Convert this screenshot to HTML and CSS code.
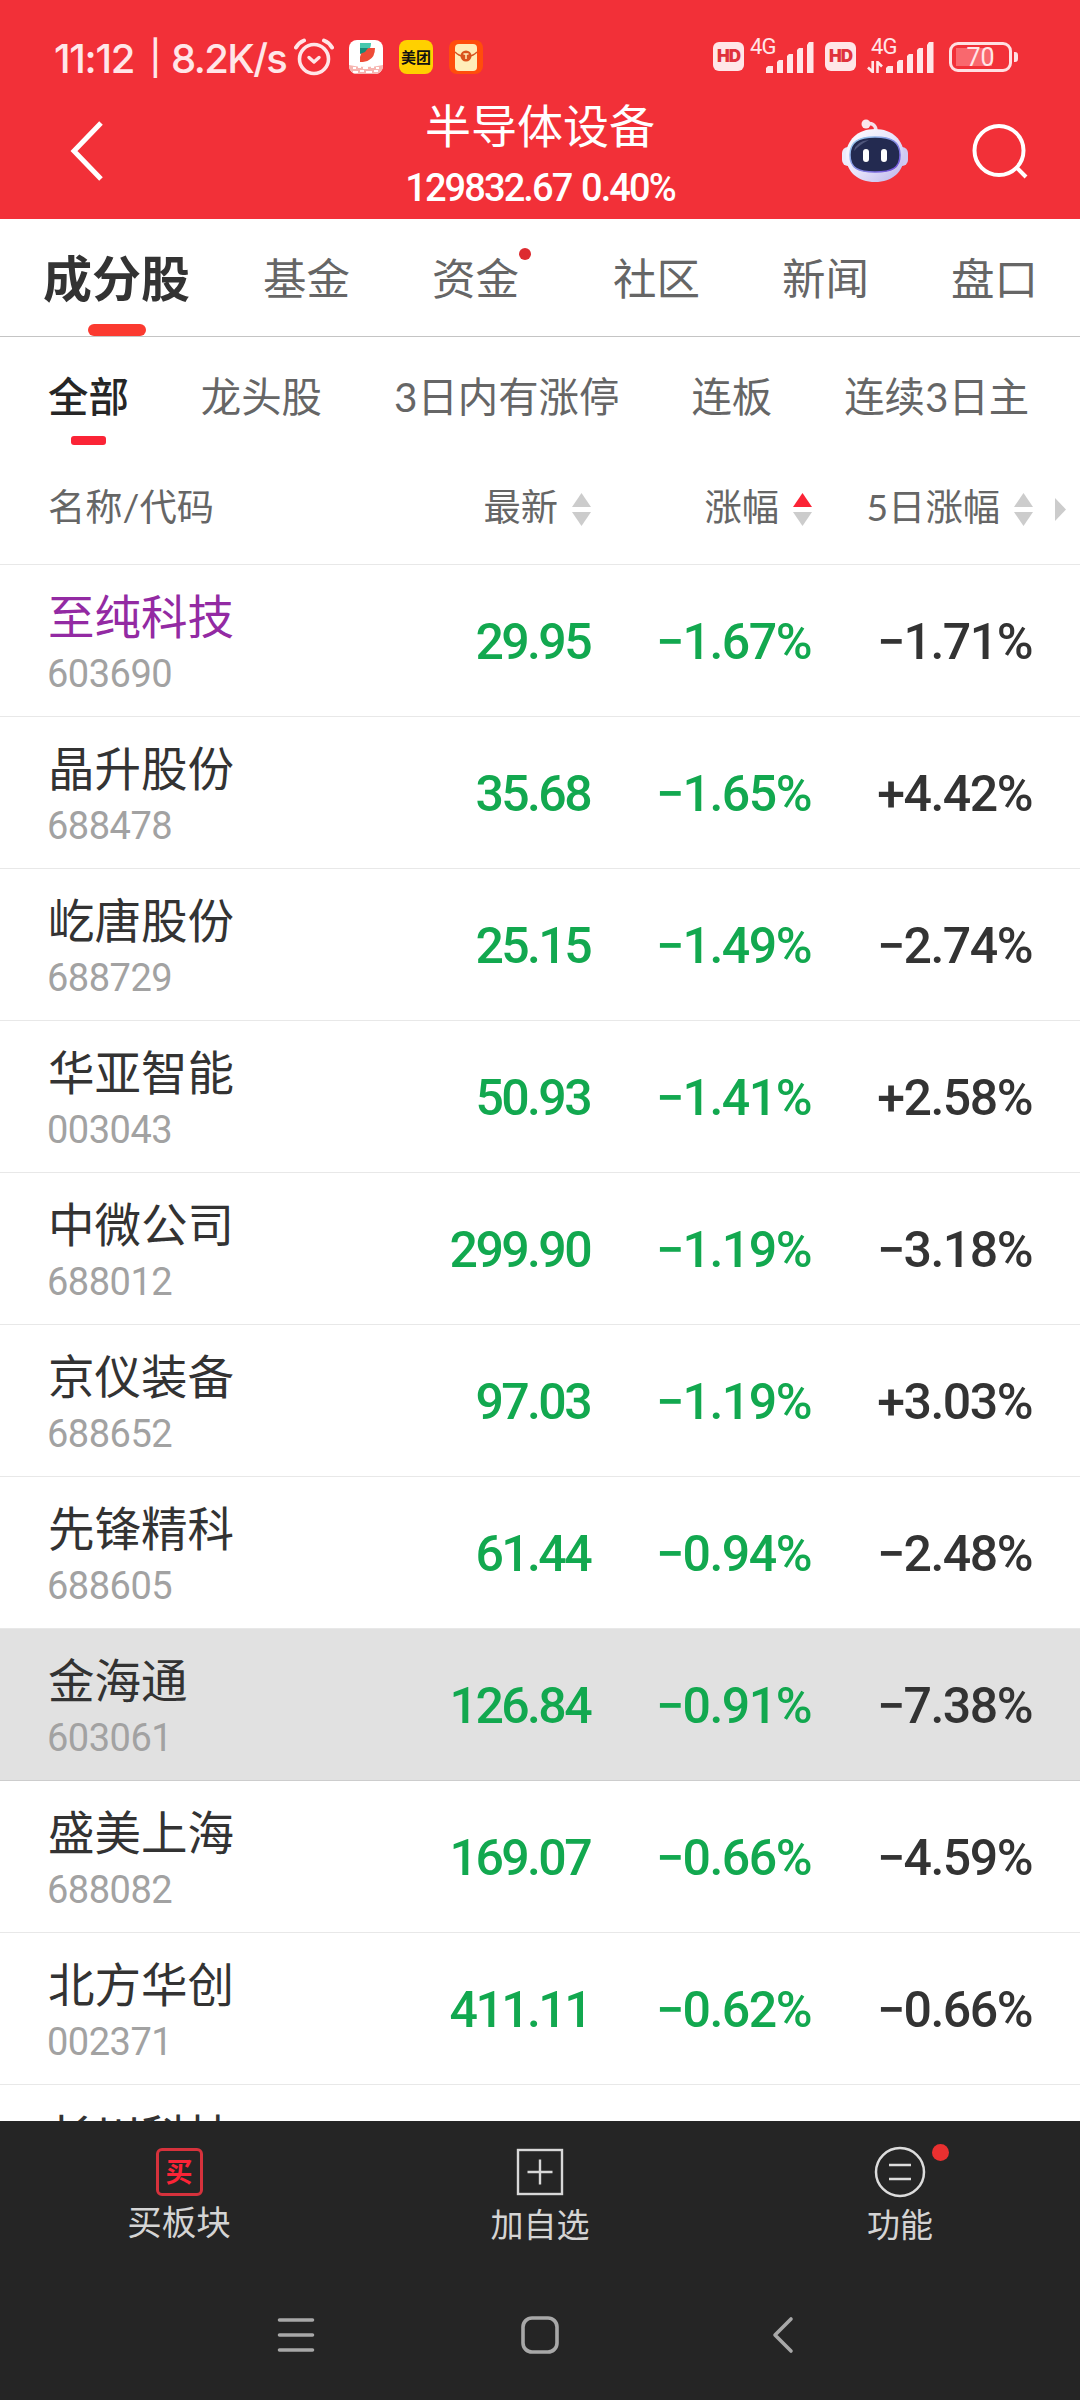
FILE: index.html
```html
<!DOCTYPE html>
<html lang="zh-CN">
<head>
    <meta charset="UTF-8">
    <meta name="viewport" content="width=device-width, initial-scale=1.0">
    <title>半导体设备</title>
    <link rel="stylesheet" href="styles.css">
</head>
<body>
    <div class="screen">
        <header class="top">
            <!-- Status Bar -->
            <div class="status">
                <div class="clock">
                    <span class="time">11:12</span>
                    <span class="bar">|</span>
                    <span>8.2K/s</span>
                </div>
                <svg class="alarm" width="40" height="38" viewBox="0 0 40 38" fill="none" stroke="#ffe6e8" stroke-linecap="round">
                    <circle cx="20" cy="21" r="14.5" stroke-width="3.6"/>
                    <path d="M15 19.500l5 4.500 5-4.500" stroke-width="3.400" stroke-linejoin="round"/>
                    <path d="M2 9.500Q5 4.500 10 2.500M38 9.500Q35 4.500 30 2.500" stroke-width="4"/>
                </svg>
                <svg class="app" width="34" height="34" viewBox="0 0 34 34">
                    <rect width="34" height="34" rx="8" fill="#fff"/>
                    <path d="M11 3h11q0 6-4 8l-7 2z" fill="#45c8ae"/>
                    <path d="M11 22V17q1-8 9-9h6q0 9-6 12-3 2-9 2z" fill="#ee4b37"/>
                    <path d="M11 8h8l-3 4-5 2z" fill="#168a78"/>
                    <path d="M0 25q17 4 34 0v1a8 8 0 0 1-8 8H8a8 8 0 0 1-8-8z" fill="#f6b5b0"/>
                    <path d="M4 28h3M9 27h3M14 28h5M22 27h3M27 28h3M4 32h5M11 31h4M17 32h6M25 31h4" stroke="#fff" stroke-width="2"/>
                </svg>
                <span class="app meituan">美团</span>
                <svg class="app" width="34" height="34" viewBox="0 0 34 34">
                    <rect width="34" height="34" rx="8" fill="#ff4d0c"/>
                    <rect x="6" y="4" width="22" height="27" rx="4" fill="#ffedb9"/>
                    <path d="M6 12q4 4 8 4h6q4 0 8-4" fill="none" stroke="#d65522" stroke-width="1.500"/>
                    <circle cx="17" cy="16" r="5.500" fill="#d9541d"/>
                    <path d="M14.500 14h5M17 14v5" stroke="#ffedb9" stroke-width="1.500"/>
                </svg>
                <div class="signals">
                    <span class="hd">HD</span>
                    <span class="net">
                        <b>4G</b>
                        <svg width="48" height="31" viewBox="0 0 48 31" fill="#ffe6e8">
                            <path d="M0 31v-5l2-2h5v7zM11 31V20l2-2h4v13zM21 31V14l2-2h4v19zM31 31V8l2-2h4v25zM41 31V3l2-3h4.500v31z"/>
                        </svg>
                    </span>
                    <span class="hd hd2">HD</span>
                    <span class="net net2">
                        <b>4G</b>
                        <svg class="updown" width="16" height="12" viewBox="0 0 16 12" fill="none" stroke="#ffe6e8" stroke-width="2.600">
                            <path d="M5.700 0v11L1 6.500M10.500 12V1l4.500 4.500"/>
                        </svg>
                        <svg width="48" height="31" viewBox="0 0 48 31" fill="#ffe6e8">
                            <path d="M0 31v-5l2-2h5v7zM11 31V20l2-2h4v13zM21 31V14l2-2h4v19zM31 31V8l2-2h4v25zM41 31V3l2-3h4.500v31z"/>
                        </svg>
                    </span>
                    <span class="battery">70</span>
                </div>
            </div>

            <!-- Title Bar -->
            <div class="titlebar">
                <svg class="back" width="36" height="64" viewBox="0 0 36 64" fill="none" stroke="#fff" stroke-width="5">
                    <path d="M33 4L6 32l27 28"/>
                </svg>
                <div class="title">
                    <h1>半导体设备</h1>
                    <p>129832.67 0.40%</p>
                </div>
                <svg class="robot" width="68" height="64" viewBox="0 0 68 64">
                    <defs>
                        <linearGradient id="shell" x1="0" y1="0" x2="1" y2="1">
                            <stop offset="0" stop-color="#fff"/>
                            <stop offset=".5" stop-color="#e8e4fb"/>
                            <stop offset="1" stop-color="#b9b3ea"/>
                        </linearGradient>
                        <linearGradient id="rim" x1="0" y1="0" x2="1" y2="1">
                            <stop offset="0" stop-color="#9fd8f0"/>
                            <stop offset="1" stop-color="#6c45d8"/>
                        </linearGradient>
                    </defs>
                    <path d="M25 5q9-2 10 6" fill="none" stroke="#f6dfe9" stroke-width="3.500"/>
                    <circle cx="25" cy="5" r="4.500" fill="#fbe6ed"/>
                    <rect x="1" y="28" width="14" height="19" rx="6" fill="#eceafa"/>
                    <rect x="53" y="28" width="14" height="19" rx="6" fill="#cfcaf2"/>
                    <path d="M34 10C51 10 63 21 63 37S51 63 34 63 5 53 5 37 17 10 34 10z" fill="url(#shell)"/>
                    <path d="M34 18C51 18 59 23 59 36S51 53 34 53 9 49 9 36 17 18 34 18z" fill="#232a50" stroke="url(#rim)" stroke-width="1.500"/>
                    <path d="M13 32q2-10 15-11-10 5-15 11z" fill="#50577c"/>
                    <rect x="22" y="30" width="6" height="13" rx="3" fill="#fff"/>
                    <rect x="40" y="30" width="6" height="13" rx="3" fill="#fff"/>
                </svg>
                <svg class="search" width="60" height="58" viewBox="0 0 60 58" fill="none" stroke="#fff" stroke-width="4">
                    <circle cx="30" cy="27.500" r="24.500"/>
                    <path d="M47 44l10 10"/>
                </svg>
            </div>
        </header>

        <!-- Main Tabs -->
        <nav class="tabs">
            <span class="tab active">成分股</span>
            <span class="tab">基金</span>
            <span class="tab dot">资金</span>
            <span class="tab">社区</span>
            <span class="tab">新闻</span>
            <span class="tab">盘口</span>
        </nav>

        <!-- Filters -->
        <nav class="filters">
            <span class="filter active">全部</span>
            <span class="filter">龙头股</span>
            <span class="filter">3日内有涨停</span>
            <span class="filter">连板</span>
            <span class="filter">连续3日主</span>
        </nav>

        <!-- Stock List -->
        <main class="list">
            <div class="row head">
                <span>名称/代码</span>
                <span class="col">最新<i class="sort"></i></span>
                <span class="col">涨幅<i class="sort up"></i></span>
                <span class="col">5日涨幅<i class="sort"></i></span>
                <i class="more"></i>
            </div>
            <div class="row">
                <div><p class="name visited">至纯科技</p><p class="code">603690</p></div>
                <span class="num price">29.95</span><span class="num green">−1.67%</span><span class="num">−1.71%</span>
            </div>
            <div class="row">
                <div><p class="name">晶升股份</p><p class="code">688478</p></div>
                <span class="num price">35.68</span><span class="num green">−1.65%</span><span class="num">+4.42%</span>
            </div>
            <div class="row">
                <div><p class="name">屹唐股份</p><p class="code">688729</p></div>
                <span class="num price">25.15</span><span class="num green">−1.49%</span><span class="num">−2.74%</span>
            </div>
            <div class="row">
                <div><p class="name">华亚智能</p><p class="code">003043</p></div>
                <span class="num price">50.93</span><span class="num green">−1.41%</span><span class="num">+2.58%</span>
            </div>
            <div class="row">
                <div><p class="name">中微公司</p><p class="code">688012</p></div>
                <span class="num price">299.90</span><span class="num green">−1.19%</span><span class="num">−3.18%</span>
            </div>
            <div class="row">
                <div><p class="name">京仪装备</p><p class="code">688652</p></div>
                <span class="num price">97.03</span><span class="num green">−1.19%</span><span class="num">+3.03%</span>
            </div>
            <div class="row">
                <div><p class="name">先锋精科</p><p class="code">688605</p></div>
                <span class="num price">61.44</span><span class="num green">−0.94%</span><span class="num">−2.48%</span>
            </div>
            <div class="row pressed">
                <div><p class="name">金海通</p><p class="code">603061</p></div>
                <span class="num price">126.84</span><span class="num green">−0.91%</span><span class="num">−7.38%</span>
            </div>
            <div class="row">
                <div><p class="name">盛美上海</p><p class="code">688082</p></div>
                <span class="num price">169.07</span><span class="num green">−0.66%</span><span class="num">−4.59%</span>
            </div>
            <div class="row">
                <div><p class="name">北方华创</p><p class="code">002371</p></div>
                <span class="num price">411.11</span><span class="num green">−0.62%</span><span class="num">−0.66%</span>
            </div>
            <div class="row">
                <div><p class="name">长川科技</p></div>
            </div>
        </main>

        <footer class="bottom">
            <!-- Actions -->
            <div class="actions">
                <div class="action buy">
                    <span class="buy-icon">买</span>
                    <span>买板块</span>
                </div>
                <div class="action">
                    <svg width="52" height="52" viewBox="0 0 52 52" fill="none" stroke="#d8d8d8" stroke-width="2.400">
                        <rect x="4" y="4" width="44" height="44"/>
                        <path d="M13.500 26h25M26 13.500v25"/>
                    </svg>
                    <span>加自选</span>
                </div>
                <div class="action">
                    <svg width="52" height="52" viewBox="0 0 52 52" fill="none" stroke="#dcdcdc" stroke-width="2.500">
                        <circle cx="26" cy="26" r="24"/>
                        <path d="M15 19h22M15 33h22"/>
                    </svg>
                    <i class="badge"></i>
                    <span>功能</span>
                </div>
            </div>
            <!-- System Navigation -->
            <div class="sysnav">
                <svg width="40" height="40" viewBox="0 0 40 40" fill="none" stroke="#a8a8a8" stroke-width="3.600" stroke-linecap="round">
                    <path d="M3.500 5h33M3.500 20h33M3.500 35h33"/>
                </svg>
                <svg width="40" height="40" viewBox="0 0 40 40" fill="none" stroke="#a8a8a8" stroke-width="3.600">
                    <rect x="3" y="3" width="34" height="34" rx="9"/>
                </svg>
                <svg width="40" height="40" viewBox="0 0 40 40" fill="none" stroke="#a8a8a8" stroke-width="3.600" stroke-linecap="round" stroke-linejoin="round">
                    <path d="M27 4L11 20l16 16"/>
                </svg>
            </div>
        </footer>
    </div>
</body>
</html>
```
FILE: styles.css
```css
* {
    box-sizing: border-box;
    margin: 0;
    padding: 0;
}
body {
    font-family: Lato, "Noto Sans CJK SC", sans-serif;
    color: #333;
    background-color: #fff;
}
i, b {
    font-style: normal;
    font-weight: normal;
}
svg {
    display: block;
    flex: none;
}
.screen {
    width: 1080px;
    height: 2400px;
    display: flex;
    flex-direction: column;
    overflow: hidden;
}

/* header */
.top {
    height: 219px;
    flex: none;
    background-color: #f23038;
    color: #fff;
}
.status {
    height: 96px;
    padding: 36px 62px 0 54px;
    display: flex;
    align-items: flex-start;
    color: #ffe6e8;
}
.clock {
    width: 240px;
    display: flex;
    font-family: Inter, sans-serif;
    font-size: 40px;
    line-height: 46px;
    font-weight: 500;
    letter-spacing: -1.6px;
    white-space: nowrap;
}
.time {
    width: 84px;
    letter-spacing: -1.300px;
}
.bar {
    width: 33px;
    text-align: center;
    font-size: 34px;
    line-height: 44px;
}
.alarm {
    margin: 2px 15px 0 0;
}
.app {
    margin: 4px 16px 0 0;
}
.meituan {
    width: 34px;
    height: 34px;
    border-radius: 8px;
    background-color: #ffd000;
    color: #111;
    font-size: 15px;
    font-weight: 700;
    line-height: 34px;
    text-align: center;
    white-space: nowrap;
}
.signals {
    margin-left: auto;
    display: flex;
}
.hd {
    width: 31px;
    height: 29px;
    margin-top: 6px;
    border-radius: 6px;
    background-color: #ffe6e8;
    color: #e0323c;
    font-family: Inter, sans-serif;
    font-size: 17px;
    font-weight: 900;
    line-height: 29px;
    text-align: center;
    letter-spacing: -1px;
}
.net {
    position: relative;
    width: 64px;
    margin: 6px 11px 0 6px;
    display: flex;
    justify-content: flex-end;
}
.net b {
    position: absolute;
    left: 0;
    top: -7px;
    font-family: Roboto, sans-serif;
    font-size: 22px;
    line-height: 24px;
    letter-spacing: -0.8px;
}
.net2 {
    width: 66px;
    margin: 6px 15px 0 12px;
}
.net2 b {
    left: 3px;
}
.net2 .updown {
    margin: 19px 3px 0 0;
}
.battery {
    position: relative;
    width: 63px;
    height: 30px;
    margin: 6px 6px 0 0;
    border: 3px solid #ffe0e2;
    border-radius: 9px;
    background: linear-gradient(#f9686e, #f9686e) 4px 3px / 36px 18px no-repeat;
    font-family: Roboto, sans-serif;
    font-size: 25px;
    line-height: 26px;
    text-align: center;
}
.battery::after {
    content: "";
    position: absolute;
    right: -9px;
    top: 7px;
    width: 4px;
    height: 10px;
    border-radius: 0 3px 3px 0;
    background-color: #ffe0e2;
}
.titlebar {
    height: 123px;
    padding: 0 50px 0 68px;
    display: flex;
    align-items: flex-start;
}
.back {
    margin: 23px 0 0;
}
.title {
    width: 500px;
    margin: 0 51px 0 186px;
    text-align: center;
}
.title h1 {
    font-size: 46px;
    font-weight: 400;
    line-height: 60px;
}
.title p {
    font-family: Roboto, sans-serif;
    font-size: 38px;
    font-weight: 500;
    line-height: 36px;
    margin-top: 14px;
    letter-spacing: -1.9px;
    word-spacing: 2px;
}
.robot {
    margin: 23px 60px 0 0;
}
.search {
    margin-top: 27px;
}

/* tabs */
.tabs {
    height: 118px;
    flex: none;
    padding: 29px 0 0 43px;
    display: flex;
    border-bottom: 1px solid #c4c4c4;
    color: #666;
    white-space: nowrap;
}
.tab {
    position: relative;
    flex: none;
    width: 88px;
    margin-right: 81px;
    font-size: 43.500px;
    line-height: 60px;
}
.tab.active {
    width: 148px;
    margin-right: 72px;
    color: #333;
    font-size: 49px;
    font-weight: 600;
}
.tab.active::after {
    content: "";
    position: absolute;
    left: 45px;
    bottom: 0;
    width: 58px;
    height: 12px;
    border-radius: 6px;
    background-color: #fb3a30;
}
.tab.dot {
    margin-right: 93px;
}
.tab.dot::after {
    content: "";
    position: absolute;
    left: 87px;
    top: 0;
    width: 12px;
    height: 12px;
    border-radius: 50%;
    background-color: #dd2b30;
}
.filters {
    height: 120px;
    flex: none;
    padding: 35px 0 0 48px;
    display: flex;
    gap: 72px;
    color: #666;
    font-size: 40.400px;
    line-height: 50px;
    white-space: nowrap;
}
.filter {
    position: relative;
}
.filter.active {
    color: #262626;
    font-weight: 500;
}
.filter.active::after {
    content: "";
    position: absolute;
    left: 23px;
    top: 64px;
    width: 35px;
    height: 9px;
    border-radius: 3px;
    background-color: #fb2436;
}

/* list */
.list {
    flex: 1;
    min-height: 0;
    overflow: hidden;
}
.row {
    position: relative;
    height: 152px;
    padding: 0 47px 0 48px;
    display: grid;
    grid-template-columns: 322px 221px 221px 221px;
    border-bottom: 1px solid #e8e8e8;
}
.row.head {
    height: 108px;
    padding-top: 27px;
    color: #666;
    font-size: 37.300px;
    line-height: 46px;
}
.col {
    display: flex;
    justify-content: flex-end;
}
.sort {
    width: 19px;
    height: 33px;
    margin: 9px 0 0 14px;
    display: flex;
    flex-direction: column;
    justify-content: space-between;
}
.sort::before,
.sort::after {
    content: "";
    height: 14px;
    background-color: #ccc;
    clip-path: polygon(50% 0, 100% 100%, 0 100%);
}
.sort::after {
    clip-path: polygon(0 0, 100% 0, 50% 100%);
}
.sort.up::before {
    background-color: #fb2436;
}
.more {
    position: absolute;
    left: 1055px;
    top: 41px;
    width: 11px;
    height: 23px;
    background-color: #ccc;
    clip-path: polygon(0 0, 100% 50%, 0 100%);
}
.name {
    margin-top: 21px;
    font-size: 46.500px;
    line-height: 60px;
    white-space: nowrap;
}
.name.visited {
    color: #932aa3;
}
.code {
    color: #a2a2a2;
    font-family: Roboto, sans-serif;
    font-size: 38px;
    line-height: 42px;
    margin-top: 7px;
    margin-left: -1px;
    letter-spacing: -0.5px;
}
.num {
    font-family: Roboto, sans-serif;
    font-size: 50px;
    font-weight: 500;
    line-height: 60px;
    margin-top: 47px;
    padding-right: 1px;
    text-align: right;
    letter-spacing: -1.500px;
    white-space: nowrap;
}
.green, .price {
    color: #12a84f;
}
.price {
    letter-spacing: -2.600px;
}
.pressed {
    background-color: #e1e1e1;
    border-bottom-color: #cdcdcd;
}

/* bottom */
.bottom {
    height: 279px;
    flex: none;
    background-color: #252525;
    color: #d4d4d4;
}
.actions {
    height: 164px;
    display: grid;
    grid-template-columns: repeat(3, 1fr);
}
.action {
    position: relative;
    padding-top: 25px;
    display: flex;
    flex-direction: column;
    align-items: center;
    gap: 6px;
    font-size: 33px;
    line-height: 40px;
}
.buy {
    padding-top: 27px;
    padding-right: 2px;
    font-size: 34.500px;
}
.buy-icon {
    width: 47px;
    height: 48px;
    border: 3px solid #d6323c;
    border-radius: 6px;
    color: #fb2436;
    font-size: 27px;
    font-weight: 700;
    line-height: 41px;
    text-align: center;
}
.badge {
    position: absolute;
    left: 212px;
    top: 23px;
    width: 17px;
    height: 17px;
    border-radius: 50%;
    background-color: #e93030;
}
.sysnav {
    padding: 30px 276px 0;
    display: flex;
    justify-content: space-between;
}
```
